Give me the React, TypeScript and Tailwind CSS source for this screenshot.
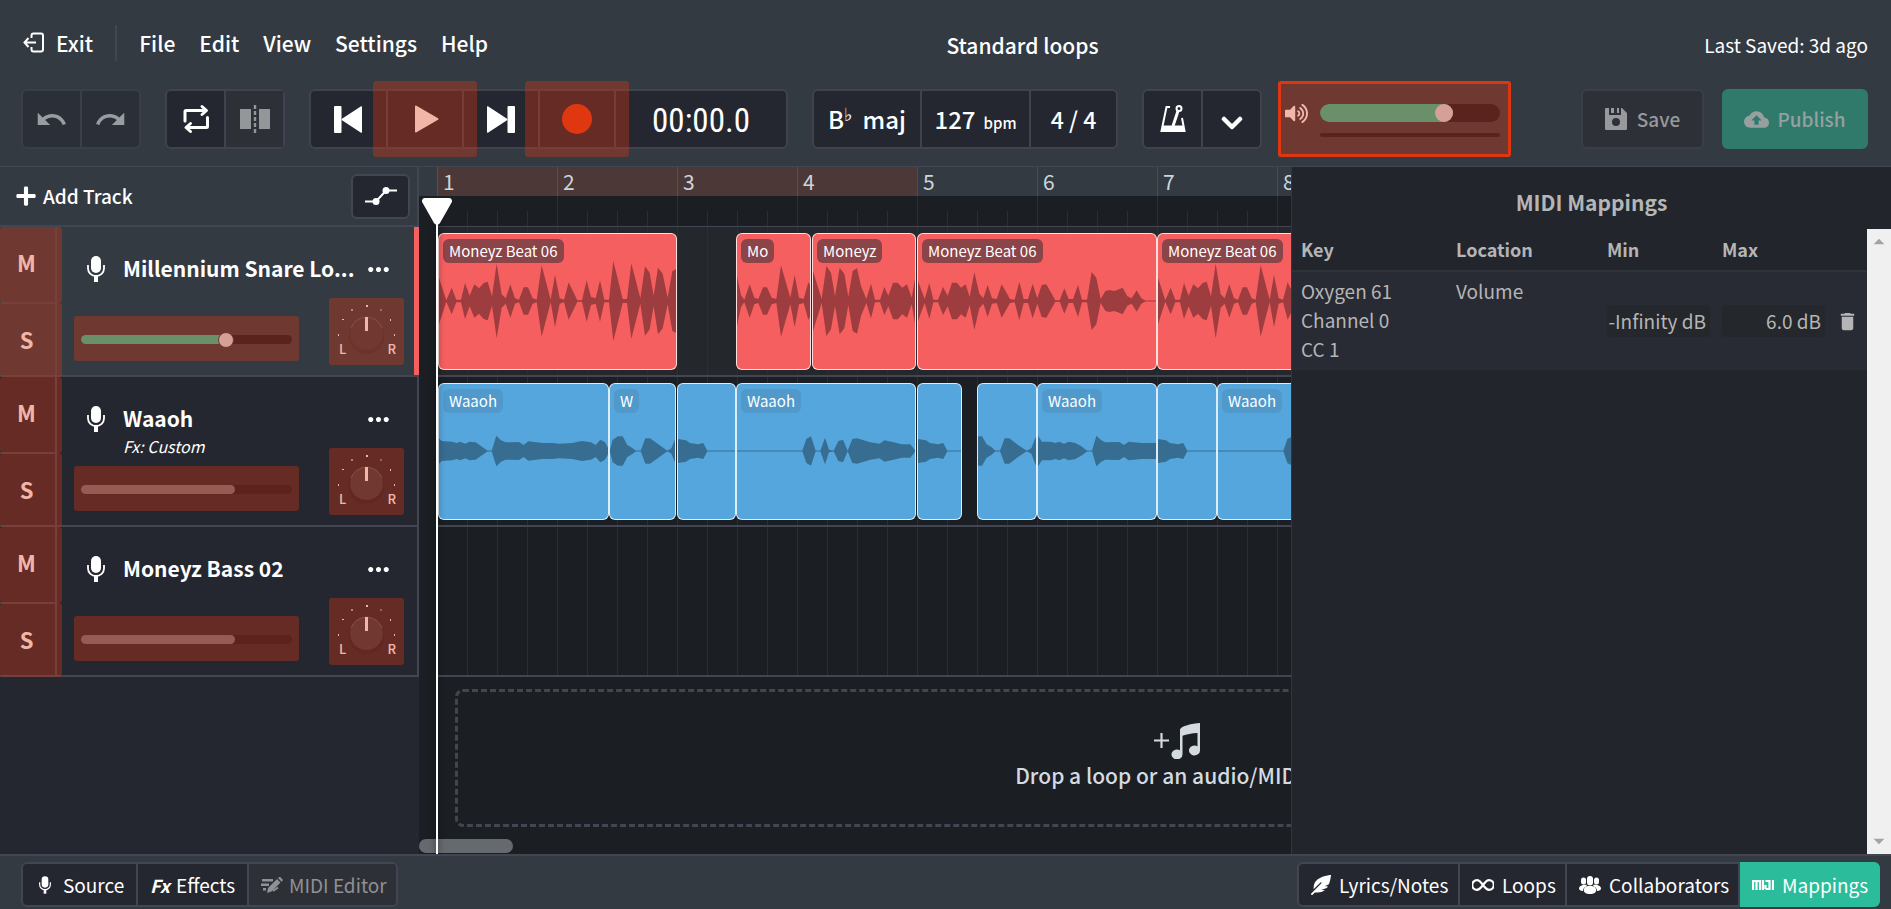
import type { ReactNode } from 'react';
import {
  MdArrowDropDown,
  MdArrowDropUp,
  MdCloudUpload,
  MdDelete,
  MdMoreHoriz,
  MdRedo,
  MdUndo,
} from 'react-icons/md';
import { FaPlus, FaFeatherAlt, FaVolumeUp } from 'react-icons/fa';

type Pt = [number, number];

type ClipData = {
  start: number;
  width: number;
  label?: string;
  wave: Pt[];
};

type TrackData = {
  name: string;
  fx?: string;
  selected?: boolean;
  live?: boolean;
};

// envelopes are stored as [x, amplitude] in thirds of a pixel
const BEAT_A: Pt[] = [
  [0, 70], [22, 2], [38, 40], [52, 4], [66, 4], [78, 54], [92, 16], [106, 50], [120, 38], [134, 54], [146, 58],
  [159, 14], [173, 112], [188, 20], [200, 8], [214, 50], [228, 8], [240, 4], [254, 41], [267, 41], [281, 8],
  [293, 4], [308, 107], [335, 4], [348, 78], [362, 8], [375, 4], [389, 56], [415, 2], [429, 2], [443, 62],
  [456, 12], [470, 8], [483, 62], [496, 4], [510, 4], [523, 120], [551, 6], [564, 6], [577, 113], [604, 8],
  [618, 104], [632, 85], [644, 16], [657, 100], [671, 82], [686, 10], [700, 90], [716, 98],
];
const BEAT_B: Pt[] = [
  [0, 75], [12, 18], [22, 4], [38, 50], [52, 10], [64, 6], [78, 41], [90, 41], [104, 10], [118, 6], [132, 107],
  [160, 10], [173, 78], [186, 10], [200, 6], [214, 56], [225, 38],
];
const BEAT_C: Pt[] = [
  [0, 90], [26, 6], [40, 105], [54, 85], [66, 14], [80, 100], [94, 82], [106, 12], [119, 90], [132, 98],
  [144, 45], [160, 6], [174, 52], [186, 4], [201, 4], [214, 42], [226, 16], [240, 55], [254, 55], [268, 40],
  [282, 50], [296, 10], [309, 85],
];
const BEAT_D: Pt[] = [
  [0, 60], [20, 6], [34, 54], [46, 4], [60, 4], [75, 42], [89, 16], [102, 55], [117, 55], [129, 40], [143, 50],
  [155, 12], [169, 87], [184, 22], [196, 8], [209, 48], [222, 8], [236, 6], [251, 50], [276, 6], [290, 4],
  [304, 58], [317, 6], [330, 6], [344, 52], [358, 8], [371, 48], [385, 50], [412, 2], [425, 2], [439, 38],
  [452, 6], [465, 6], [480, 48], [492, 4], [507, 4], [521, 87], [535, 70], [548, 6], [562, 30], [575, 33],
  [588, 30], [600, 34], [614, 40], [628, 14], [641, 8], [656, 32], [670, 8], [683, 1], [720, 1],
];

const VOX_A: Pt[] = [
  [0, 38], [8, 30], [40, 28], [52, 24], [64, 28], [78, 22], [92, 28], [110, 26], [130, 12], [146, 1], [158, 1],
  [172, 46], [186, 32], [200, 26], [214, 26], [240, 27], [254, 18], [268, 29], [310, 24], [340, 24], [360, 22],
  [400, 24], [428, 30], [456, 26], [470, 18], [484, 34], [498, 26], [510, 4],
];
const VOX_B: Pt[] = [
  [0, 4], [8, 34], [24, 44], [38, 44], [52, 18], [66, 10], [78, 1], [92, 1], [106, 38], [120, 38], [145, 20],
  [172, 1], [184, 8], [198, 42],
];
const VOX_TAIL: Pt[] = [[0, 36], [24, 32], [36, 24], [60, 20], [76, 24], [88, 1], [180, 1]];
const VOX_C: Pt[] = [
  [0, 1], [196, 1], [208, 36], [222, 44], [236, 1], [250, 1], [264, 40], [276, 4], [290, 1], [304, 30],
  [318, 34], [332, 1], [346, 36], [360, 38], [400, 26], [414, 24], [428, 22], [442, 32], [470, 26], [495, 20],
  [520, 20], [535, 2],
];
const VOX_D: Pt[] = [
  [0, 44], [12, 44], [26, 20], [40, 12], [52, 1], [66, 1], [80, 38], [94, 38], [120, 18], [146, 1], [160, 8],
  [172, 40], [180, 44],
];
const VOX_E: Pt[] = [
  [0, 46], [12, 28], [38, 28], [52, 24], [64, 28], [78, 22], [92, 28], [112, 24], [130, 14], [148, 1],
  [162, 1], [175, 46], [190, 32], [202, 26], [244, 27], [258, 18], [272, 28], [310, 24], [360, 24],
];

const BEAT_CLIPS: ClipData[] = [
  { start: 0, width: 239, label: 'Moneyz Beat 06', wave: BEAT_A },
  { start: 298, width: 75, label: 'Mo', wave: BEAT_B },
  { start: 374, width: 104, label: 'Moneyz', wave: BEAT_C },
  { start: 479, width: 240, label: 'Moneyz Beat 06', wave: BEAT_D },
  { start: 719, width: 240, label: 'Moneyz Beat 06', wave: BEAT_A },
];

const VOX_CLIPS: ClipData[] = [
  { start: 0, width: 171, label: 'Waaoh', wave: VOX_A },
  { start: 171, width: 67, label: 'W', wave: VOX_B },
  { start: 239, width: 59, wave: VOX_TAIL },
  { start: 298, width: 180, label: 'Waaoh', wave: VOX_C },
  { start: 479, width: 45, wave: VOX_TAIL },
  { start: 539, width: 60, wave: VOX_D },
  { start: 599, width: 120, label: 'Waaoh', wave: VOX_E },
  { start: 719, width: 60, wave: VOX_TAIL },
  { start: 779, width: 180, label: 'Waaoh', wave: VOX_C },
];

const TRACKS: TrackData[] = [
  { name: 'Millennium Snare Lo...', selected: true, live: true },
  { name: 'Waaoh', fx: 'Fx: Custom' },
  { name: 'Moneyz Bass 02' },
];

const BARS = [1, 2, 3, 4, 5, 6, 7, 8];

const wavePath = (pts: Pt[]) => {
  const top = pts.map(([x, a]) => `${x / 3} ${68 - a / 3}`);
  const bottom = [...pts].reverse().map(([x, a]) => `${x / 3} ${68 + a / 3}`);
  return `M${[...top, ...bottom].join('L')}Z`;
};

/* Highlight drawn over everything that can be mapped to a MIDI control */
const Mappable = ({ className }: { className: string }) => (
  <span className={`pointer-events-none absolute rounded-[3px] bg-[#dc3512]/[0.36] ${className}`} />
);

const Group = ({ children, className = '' }: { children: ReactNode; className?: string }) => (
  <div className={`flex h-15 shrink-0 divide-x-2 divide-[#40434f] rounded-md border-2 border-[#40434f] bg-[#24272f] ${className}`}>
    {children}
  </div>
);

const MicIcon = ({ className }: { className: string }) => (
  <svg viewBox="0 0 18 26" className={className} fill="currentColor" aria-hidden="true">
    <rect x="4" y="0" width="10" height="17" rx="5" />
    <path d="M1 9v3.500a8 7.500 0 0 0 16 0V9" fill="none" stroke="currentColor" strokeWidth="1.800" />
    <rect x="7" y="20" width="4" height="6" />
  </svg>
);

const Menu = () => (
  <div className="grid h-[81px] grid-cols-[6fr_auto_5fr] items-center pt-2 pr-[23px] pb-1 pl-[23px]">
    <nav className="flex items-center text-[21px] leading-7 font-medium">
      <a href="#exit" className="flex items-center gap-3">
        <svg viewBox="0 0 21 21" className="h-[21px] w-[21px]" fill="none" stroke="currentColor" strokeWidth="2" aria-hidden="true">
          <path d="M8.500 6V3.500a2 2 0 0 1 2-2H18a2 2 0 0 1 2 2v14a2 2 0 0 1-2 2h-7.500a2 2 0 0 1-2-2V15" />
          <path d="M13 10.500H1.500M5.500 6l-4 4.500 4 4.500" />
        </svg>
        Exit
      </a>
      <span className="mx-[22px] h-9 w-0.5 bg-[#434652]" />
      <div className="flex gap-6">
        <a href="#file">File</a>
        <a href="#edit">Edit</a>
        <a href="#view">View</a>
        <a href="#settings">Settings</a>
        <a href="#help">Help</a>
      </div>
    </nav>
    <h1 className="pt-1 text-[21px] leading-7 font-medium">Standard loops</h1>
    <p className="pt-1 text-right text-[19px] leading-7">Last Saved: 3d ago</p>
  </div>
);

const Toolbar = () => (
  <div className="flex items-center gap-6 pr-[23px] pb-[9px] pl-[21px]">
    <Group className="w-30 opacity-50">
      <button className="flex flex-1 items-center justify-center" aria-label="Undo" disabled>
        <MdUndo size={33} />
      </button>
      <button className="flex flex-1 items-center justify-center" aria-label="Redo" disabled>
        <MdRedo size={33} />
      </button>
    </Group>

    <Group className="w-30">
      <button className="flex flex-1 items-center justify-center" aria-label="Loop">
        <svg viewBox="0 0 28 30" className="h-[30px] w-7" fill="none" stroke="currentColor" strokeWidth="3" strokeLinecap="round" strokeLinejoin="round" aria-hidden="true">
          <path d="M3 17V7.500a1 1 0 0 1 1-1h20M20 2.500l4.500 4-4.500 4" />
          <path d="M25.500 13.500v9a1 1 0 0 1-1 1h-20M8.500 19.500l-4.500 4 4.500 4" />
        </svg>
      </button>
      <button className="flex flex-1 items-center justify-center bg-[#2d3037] text-[#94979a]" aria-label="Split" disabled>
        <svg viewBox="0 0 30 28" className="h-7 w-[30px]" fill="currentColor" aria-hidden="true">
          <rect x="0" y="4" width="11" height="20" />
          <rect x="19" y="4" width="11" height="20" />
          <path d="M15 0v28" stroke="currentColor" strokeWidth="2.400" strokeDasharray="4 2" />
        </svg>
      </button>
    </Group>

    <Group className="w-[479px]">
      <button className="flex w-[77px] items-center justify-end pr-6" aria-label="Go to start">
        <svg viewBox="0 0 28 27" className="h-[27px] w-7" fill="currentColor" aria-hidden="true">
          <rect width="7.500" height="27" rx="1" />
          <path d="M28 1v25a.8.8 0 0 1-1.300.6L8 14.300a1 1 0 0 1 0-1.600L26.700.4A.8.8 0 0 1 28 1z" />
        </svg>
      </button>
      <button className="relative flex w-[76px] items-center justify-center" aria-label="Play">
        <svg viewBox="0 0 24 28" className="ml-1 h-7 w-6" fill="currentColor" aria-hidden="true">
          <path d="M0 1.500v25a1 1 0 0 0 1.500.8L23 14.800a1 1 0 0 0 0-1.600L1.500.7A1 1 0 0 0 0 1.500z" />
        </svg>
        <Mappable className="-inset-x-[15px] -top-[10px] -bottom-[10px]" />
      </button>
      <button className="flex w-[76px] items-center justify-center" aria-label="Go to end">
        <svg viewBox="0 0 28 27" className="h-[27px] w-7" fill="currentColor" aria-hidden="true">
          <rect x="20.500" width="7.500" height="27" rx="1" />
          <path d="M0 1v25a.8.8 0 0 0 1.300.6L20 14.300a1 1 0 0 0 0-1.600L1.300.4A.8.8 0 0 0 0 1z" />
        </svg>
      </button>
      <button className="relative flex w-[76px] items-center justify-center" aria-label="Record">
        <Mappable className="-inset-x-[15px] -top-[10px] -bottom-[10px]" />
        <span className="relative size-[30px] rounded-full bg-[#df3811]" />
      </button>
      <time className="flex flex-1 items-center justify-center pt-1 text-[33px] leading-9">
        <span className="font-['Roboto_Condensed','Noto_Sans_CJK_SC',sans-serif]">00:00.0</span>
      </time>
    </Group>

    <Group className="w-[306px]">
      <button className="flex w-[108px] items-center justify-center gap-2.5 text-[24px] leading-8 font-medium">
        <span className="flex items-start">
          B<span className="font-['DejaVu_Sans',sans-serif] text-[18px] leading-6 font-normal">♭</span>
        </span>
        maj
      </button>
      <button className="flex flex-1 items-center justify-center gap-2 text-[24px] leading-8 font-medium">
        127 <span className="pt-2 text-[15px] leading-6">bpm</span>
      </button>
      <button className="flex w-[85px] items-center justify-center text-[23px] leading-8 font-medium">4 / 4</button>
    </Group>

    <div className="flex items-center gap-4">
      <Group className="w-30">
        <button className="flex flex-1 items-center justify-center" aria-label="Metronome">
          <svg viewBox="0 0 26 28" className="h-7 w-[26px]" fill="none" stroke="currentColor" strokeWidth="2" aria-hidden="true">
            <path d="M10 2H6.500L1.500 26h23L22 13" />
            <path d="M2.500 20.500h21L25 27H1z" fill="currentColor" stroke="none" />
            <path d="M13 21l5-15" strokeWidth="3" />
            <circle cx="19" cy="3.500" r="2.500" />
          </svg>
        </button>
        <button className="flex flex-1 items-center justify-center" aria-label="Metronome options">
          <svg viewBox="0 0 22 14" className="mt-2 h-3.5 w-[22px]" fill="none" stroke="currentColor" strokeWidth="4.500" strokeLinecap="round" strokeLinejoin="round" aria-hidden="true">
            <path d="M3 3l8 8 8-8" />
          </svg>
        </button>
      </Group>

      <div className="relative flex h-[76px] w-[233px] gap-3 rounded-[3px] border-[3px] border-[#df3811] pt-5 pr-2 pl-1">
        <Mappable className="-inset-[3px]" />
        <FaVolumeUp size={23} className="relative -mt-0.5 shrink-0 text-[#f3b6aa]" />
        <div className="relative flex-1">
          <div className="flex h-[18px] rounded-full bg-[#5b231d]">
            <div className="h-full w-[133px] rounded-full bg-[#6a8f6b]" />
            <div className="-ml-[18px] size-[18px] rounded-full bg-[#d7a097]" />
          </div>
          <div className="mt-[11px] h-1 rounded-full bg-[#5b231d]" />
          <input type="range" aria-label="Master volume" defaultValue={70} className="absolute inset-x-0 top-0 h-[18px] w-full opacity-0" />
        </div>
      </div>
    </div>

    <div className="ml-auto flex gap-[18px]">
      <button className="flex h-15 w-[123px] items-center justify-center gap-2.5 rounded-md border-2 border-[#3b3e47] bg-[#2d3037] text-[19px] leading-7 font-medium text-[#97999c]" disabled>
        <svg viewBox="0 0 22 22" className="size-[22px]" fill="currentColor" fillRule="evenodd" aria-hidden="true">
          <path d="M0 1a1 1 0 0 1 1-1h3v7h12V0h1l5 5v16a1 1 0 0 1-1 1H1a1 1 0 0 1-1-1zM11 10a4 4 0 1 0 0 8 4 4 0 0 0 0-8zM6 0h3v5H6zM12 0h2v5h-2z" />
        </svg>
        Save
      </button>
      <button className="flex h-15 w-[146px] items-center justify-center gap-2 rounded-md bg-[#307a6c] text-[19px] leading-7 font-medium text-[#97a09f]" disabled>
        <MdCloudUpload size={25} />
        Publish
      </button>
    </div>
  </div>
);

const Knob = () => (
  <div className="relative h-[67px] w-[75px] shrink-0">
    <svg viewBox="0 0 75 67" className="absolute inset-0" aria-hidden="true">
      <circle cx="37.500" cy="38" r="18" fill="#000" opacity="0.12" />
      <circle cx="37.500" cy="35.500" r="16.500" fill="#343a42" />
      <path d="M22 30a16.500 16.500 0 0 1 31 0" fill="none" stroke="#5b5f66" strokeWidth="1" />
      <rect x="36" y="19" width="3" height="14" fill="#fff" />
      <g fill="#fff">
        <rect x="37" y="7" width="2" height="2" />
        <rect x="22" y="11" width="2" height="2" opacity="0.6" />
        <rect x="51" y="11" width="2" height="2" opacity="0.4" />
        <rect x="13" y="21" width="2" height="1" />
        <rect x="61" y="21" width="1" height="2" />
        <rect x="9" y="36" width="1" height="2" />
        <rect x="65" y="36" width="1" height="2" />
      </g>
    </svg>
    <span className="absolute bottom-2 left-2.5 text-[13px] leading-4 font-medium">L</span>
    <span className="absolute right-2 bottom-2 text-[13px] leading-4 font-medium">R</span>
    <Mappable className="inset-0" />
  </div>
);

const Track = ({ track }: { track: TrackData }) => (
  <li className={`flex h-[150px] border-b-2 border-[#434652] ${track.selected ? 'bg-[#333a42]' : 'bg-[#24272f]'}`}>
    <div className="flex w-[57px] shrink-0 flex-col divide-y-2 divide-[#434652] border-r-2 border-[#434652] text-[22px] leading-7 font-bold">
      <button className="relative h-[77px] shrink-0 pr-0.5 pb-1.5" aria-label={`Mute ${track.name}`}>
        M
        <Mappable className="top-0 -right-[7px] -bottom-px left-0" />
      </button>
      <button className="relative flex-1 pr-0.5 pb-0.5" aria-label={`Solo ${track.name}`}>
        S
        <Mappable className="-top-px -right-[7px] -bottom-0.5 left-0" />
      </button>
    </div>
    <div className={`relative min-w-0 flex-1 ${track.selected ? 'border-r-[5px] border-[#f55f5f]' : 'border-r-2 border-[#434652]'}`}>
      <div className="flex pt-7 pl-[30px]">
        <MicIcon className="mt-px h-[26px] w-[18px] shrink-0" />
        <div className="ml-[18px] w-[241px] shrink-0">
          <h2 className="-mt-px text-[21px] leading-7 font-bold whitespace-nowrap">{track.name}</h2>
          {track.fx && <p className="mt-0.5 text-[16px] leading-6 italic">{track.fx}</p>}
        </div>
        <button className="flex h-7 w-7 items-center justify-center" aria-label={`${track.name} options`}>
          <MdMoreHoriz size={31} className="shrink-0" />
        </button>
      </div>
      <div className="absolute top-[71px] left-[17px] flex w-[330px] justify-between">
        <div className="relative mt-[18px] h-[45px] w-[225px] px-[7px] pt-[19px]">
          {!track.live && (
            <div className="h-[9px] rounded-full bg-[#131921]">
              <div className="h-full w-[154px] rounded-full bg-[#6e737a]" />
            </div>
          )}
          <Mappable className="inset-0" />
          {track.live && (
            <div className="relative flex h-[9px] items-center rounded-full bg-[#5b231d]">
              <div className="h-full w-[145px] rounded-l-full bg-[#6a8f6b]" />
              <div className="-ml-2 size-4 rounded-full border border-[#6e3830] bg-[#d7a097]" />
            </div>
          )}
          <input type="range" aria-label={`${track.name} volume`} defaultValue={70} className="absolute inset-0 size-full opacity-0" />
        </div>
        <Knob />
      </div>
    </div>
  </li>
);

const Sidebar = () => (
  <aside className="w-[419px] shrink-0 bg-[#24272f]">
    <div className="flex h-[60px] items-center justify-between border-r-2 border-b-2 border-[#434652] bg-[#333a42] pr-[7px] pl-[15px]">
      <button className="flex items-center gap-1.5 text-[19px] leading-7 font-medium">
        <FaPlus size={22} />
        Add Track
      </button>
      <button className="flex h-[45px] w-[59px] items-center justify-center rounded-md border-2 border-[#434652] bg-[#24272f]" aria-label="Show automation">
        <svg viewBox="0 0 32 18" className="h-[18px] w-8" fill="none" stroke="currentColor" strokeWidth="2" aria-hidden="true">
          <path d="M0 14.500h11L21 3.500h11" />
          <circle cx="11" cy="14.500" r="3.500" fill="currentColor" stroke="none" />
          <circle cx="21" cy="3.500" r="3.500" fill="currentColor" stroke="none" />
        </svg>
      </button>
    </div>
    <ul>
      {TRACKS.map((track) => (
        <Track key={track.name} track={track} />
      ))}
    </ul>
  </aside>
);

const Clip = ({ clip, color }: { clip: ClipData; color: 'red' | 'blue' }) => (
  <div
    className={`absolute top-1.5 h-[137px] overflow-hidden rounded-md border border-white/80 ${color === 'red' ? 'bg-[#f55f5f]' : 'bg-[#55a6dc]'}`}
    style={{ left: clip.start, width: clip.width }}
  >
    <svg className="absolute -top-px left-0 h-[137px] w-full" aria-hidden="true">
      <path d={wavePath(clip.wave)} className={color === 'red' ? 'fill-[#9e3d40]' : 'fill-[#386d92]'} />
      <path d="M0 68h400" strokeWidth="1" className={color === 'red' ? 'stroke-[#9e3d40]/60' : 'stroke-[#386d92]/60'} />
    </svg>
    {clip.label && (
      <span className={`absolute top-[5px] left-1 rounded-md px-1.5 text-[15px] leading-6 whitespace-nowrap ${color === 'red' ? 'bg-[#8b4448]' : 'bg-[#5099ca]'}`}>
        {clip.label}
      </span>
    )}
  </div>
);

const Lane = ({ clips, color, selected }: { clips?: ClipData[]; color?: 'red' | 'blue'; selected?: boolean }) => (
  <div
    className={`relative h-[150px] border-b-2 border-[#434652] bg-[linear-gradient(to_right,#2b2e33_1px,transparent_1px)] bg-[length:30px_100%] bg-[position:-1px_0] ${selected ? 'bg-[#24272b]' : 'bg-[#1b1e22]'}`}
  >
    {clips && color && clips.map((clip) => <Clip key={clip.start} clip={clip} color={color} />)}
  </div>
);

const Timeline = () => (
  <section className="relative min-w-0 flex-1 overflow-hidden bg-[#1b1e22]">
    <div className="w-[1500px] pl-[19px]">
      <div className="-ml-[19px] flex h-[29px] bg-[#333a42] pl-[18px] text-[21px] leading-7 text-[#cbd5dc]">
        {BARS.map((bar) => (
          <div key={bar} className={`w-30 shrink-0 border-l border-white/10 pl-[5px] ${bar < 5 ? 'bg-[#4d3838]' : ''}`}>
            {bar}
          </div>
        ))}
      </div>
      <div className="flex h-[31px] items-end border-b border-[#434652] bg-[linear-gradient(to_right,#2b2e33_1px,transparent_1px)] bg-[length:120px_100%] bg-[position:-1px_0]">
        <div className="h-[15px] w-full bg-[linear-gradient(to_right,#2b2e33_1px,transparent_1px)] bg-[length:30px_100%] bg-[position:-1px_0]" />
      </div>
      <Lane clips={BEAT_CLIPS} color="red" selected />
      <Lane clips={VOX_CLIPS} color="blue" />
      <Lane />
      <div className="mt-3 ml-[17px] flex h-[138px] w-[1444px] flex-col items-center justify-center rounded-lg border-[3px] border-dashed border-[#434652] pb-0.5 text-[#d3dbe1]">
        <svg viewBox="0 0 46 36" className="h-9 w-[46px]" fill="currentColor" aria-hidden="true">
          <path d="M0 17.500h15M7.500 10v15" stroke="currentColor" strokeWidth="2.200" />
          <path d="M26 6.500C27 3 38 .5 46 0v27.500a5.500 5 0 1 1-2.500-4.200V10c-6 .3-11 1.200-15 2.800v18.700a5.500 5 0 1 1-2.500-4.200z" />
        </svg>
        <p className="text-[21px] leading-8 font-medium">Drop a loop or an audio/MIDI file</p>
      </div>
    </div>
    <div className="absolute bottom-px left-0 h-3.5 w-[94px] rounded-full bg-[#646a6e]" />
    <div className="absolute top-[50px] bottom-0 left-[17px] w-0.5 bg-white shadow-[0_0_6px_rgba(0,0,0,0.6)]" />
    <svg viewBox="0 0 30 27" className="absolute top-[31px] left-[3px] h-[27px] w-[30px]" aria-hidden="true">
      <path d="M3 0h24a3 3 0 0 1 2.600 4.500L18 25a3.500 3.500 0 0 1-6 0L.4 4.500A3 3 0 0 1 3 0z" fill="#fff" />
    </svg>
  </section>
);

const Mappings = () => (
  <section className="flex w-[600px] shrink-0 flex-col border-l border-[#33363c] bg-[#22252c] text-[#b5b5b5]">
    <h2 className="flex h-[62px] items-center justify-center pt-2 text-[21px] leading-7 font-bold">MIDI Mappings</h2>
    <div className="flex min-h-0 flex-1">
      <div className="min-w-0 flex-1">
        <table className="w-full table-fixed text-left text-[19px] leading-[29px]">
          <thead className="text-[18px]">
            <tr className="h-[42px] border-b-2 border-[#2f3238]">
              <th className="w-[155px] pl-[9px] font-bold">Key</th>
              <th className="w-[151px] pl-[9px] font-bold">Location</th>
              <th className="w-[115px] pl-[9px] font-bold">Min</th>
              <th className="w-[115px] pl-[9px] font-bold">Max</th>
              <th aria-label="Actions" />
            </tr>
          </thead>
          <tbody>
            <tr className="h-[99px] bg-[#282b33]">
              <td className="pb-[3px] pl-[9px]">
                Oxygen 61
                <br />
                Channel 0
                <br />
                CC 1
              </td>
              <td className="pt-1 pl-[9px] align-top">Volume</td>
              <td className="pl-[9px]">
                <input aria-label="Min" defaultValue="-Infinity dB" className="block h-8 w-[103px] rounded bg-[#24272b] pr-1 pb-0.5 text-right" />
              </td>
              <td className="pl-[9px]">
                <input aria-label="Max" defaultValue="6.0 dB" className="block h-8 w-[103px] rounded bg-[#24272b] pr-1 pb-0.5 text-right" />
              </td>
              <td className="pl-2">
                <button className="block" aria-label="Delete mapping">
                  <MdDelete size={23} />
                </button>
              </td>
            </tr>
          </tbody>
        </table>
      </div>
      <div className="flex w-6 flex-col items-center justify-between bg-[#f0f0f0] text-[#a3a3a3]">
        <MdArrowDropUp size={26} />
        <MdArrowDropDown size={26} />
      </div>
    </div>
  </section>
);

const MidiEditorIcon = () => (
  <svg viewBox="0 0 22 16" className="h-4 w-[22px]" fill="currentColor" aria-hidden="true">
    <path d="M1 2h11v2.400H1zM0 6.500h8v2.400H0zM2 11h3v2.400H2z" />
    <path d="M7 11L16 2l3.500 3.500-9 9L6 16zM17 1l1-.8a1 1 0 0 1 1.400 0l2.200 2.200a1 1 0 0 1 0 1.300l-1 1z" />
    <path d="M12 14l5-3.500" stroke="currentColor" strokeWidth="2" />
  </svg>
);

const PeopleIcon = () => (
  <svg viewBox="0 0 22 18" className="h-[18px] w-[22px]" fill="currentColor" aria-hidden="true">
    <rect x="2" y="1.500" width="5" height="7" rx="2.500" />
    <rect x="15" y="1.500" width="5" height="7" rx="2.500" />
    <path d="M7.500 8.800c.7 1 .4 1.700-1 2.300C5 11.800 4 13 4 15 1.500 14.800 0 14 0 12.500c0-2 1.500-2.800 4.500-3.700zM14.500 8.800c-.7 1-.4 1.700 1 2.300 1.500.7 2.500 1.900 2.500 3.900 2.500-.2 4-1 4-2.500 0-2-1.500-2.800-4.500-3.700z" />
    <rect x="8" y="0" width="6" height="9.500" rx="3" />
    <path d="M9 10h4c3 .8 4.200 2 4.200 4.200 0 2.200-2.500 3.800-6.200 3.800s-6.200-1.600-6.200-3.800C4.800 12 6 10.800 9 10z" />
  </svg>
);

const Footer = () => (
  <footer className="flex shrink-0 items-start justify-between border-t-2 border-[#434652] bg-[#333a42] pt-1.5 pr-[11px] pb-0.5 pl-[21px] text-[19px] leading-7">
    <div className="flex h-[45px] divide-x-2 divide-[#434652] overflow-hidden rounded-md border-2 border-[#434652] bg-[#24272f]">
      <button className="flex w-[115px] items-center gap-3 pl-4">
        <MicIcon className="h-[18px] w-3" />
        Source
      </button>
      <button className="flex w-[111px] items-center gap-1.5 pl-3">
        <b className="text-[18px] italic">Fx</b>
        Effects
      </button>
      <button className="flex w-[147px] items-center gap-1.5 bg-[#2d3037] pl-3 text-[#8f9194]" disabled>
        <MidiEditorIcon />
        MIDI Editor
      </button>
    </div>
    <div className="relative flex h-[45px] divide-x-2 divide-[#434652] rounded-md border-2 border-[#434652] bg-[#24272f]">
      <button className="flex w-[161px] items-center gap-2 pl-3">
        <FaFeatherAlt size={20} />
        Lyrics/Notes
      </button>
      <button className="flex w-[107px] items-center gap-2 pl-3">
        <svg viewBox="0 0 22 12" className="h-3 w-[22px]" fill="none" stroke="currentColor" strokeWidth="2.200" aria-hidden="true">
          <path d="M11 6C8 2 7 1.200 5 1.200a4.800 4.800 0 0 0 0 9.600C7 10.800 8 10 11 6s4-4.800 6-4.800a4.800 4.800 0 0 1 0 9.600c-2 0-3-.8-6-4.800z" />
        </svg>
        Loops
      </button>
      <button className="flex w-[173px] items-center gap-2 pl-3">
        <PeopleIcon />
        Collaborators
      </button>
      <button className="-my-0.5 -mr-0.5 flex w-[140px] items-center gap-2 rounded-r-md bg-[#2bbd9b] pl-3">
        <svg viewBox="0 0 22 10" className="h-2.5 w-[22px]" fill="none" stroke="currentColor" strokeWidth="2.200" aria-hidden="true">
          <path d="M1 10V1h7v9M4.500 1v9M11 0v10M13.500 1h4v8h-4M13.500 5v4M21 0v10" />
        </svg>
        Mappings
      </button>
    </div>
  </footer>
);

const App = () => {
  return (
    <div className="flex h-screen flex-col overflow-hidden bg-[#333a42] font-['Noto_Sans_CJK_SC',sans-serif] text-white">
      <header className="shrink-0 border-b border-[#434652]">
        <Menu />
        <Toolbar />
      </header>
      <main className="flex min-h-0 flex-1">
        <Sidebar />
        <Timeline />
        <Mappings />
      </main>
      <Footer />
    </div>
  );
};

export default App;
